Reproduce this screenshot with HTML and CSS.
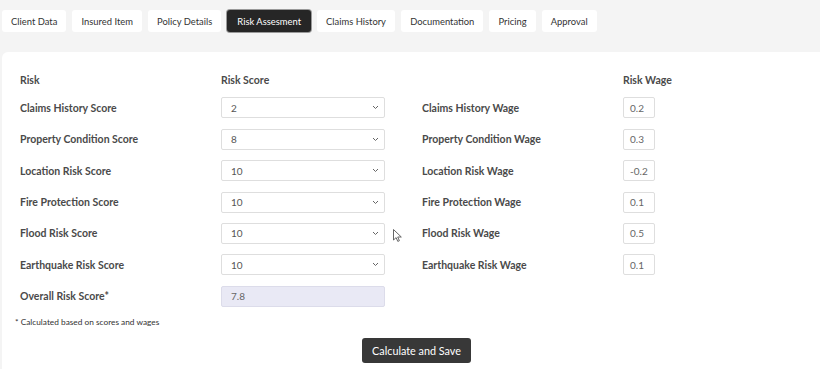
FILE: index.html
```html
<!DOCTYPE html>
<html lang="en">
<head>
<meta charset="utf-8">
<title>Risk Assesment</title>
<link rel="stylesheet" href="styles.css">
</head>
<body>
<nav class="tabs">
  <span class="tab">Client Data</span>
  <span class="tab">Insured Item</span>
  <span class="tab">Policy Details</span>
  <span class="tab active">Risk Assesment</span>
  <span class="tab">Claims History</span>
  <span class="tab">Documentation</span>
  <span class="tab">Pricing</span>
  <span class="tab">Approval</span>
</nav>
<main class="card">
  <div class="grid">
    <div class="head">Risk</div>
    <div class="head">Risk Score</div>
    <div class="head"></div>
    <div class="head">Risk Wage</div>

    <div class="label">Claims History Score</div>
    <div class="select"><span>2</span><svg class="chev" width="7" height="5" viewBox="0 0 7 5"><path d="M1 1l2.5 2.5L6 1" fill="none" stroke="#666" stroke-width="1"/></svg></div>
    <div class="label">Claims History Wage</div>
    <div class="wage">0.2</div>

    <div class="label">Property Condition Score</div>
    <div class="select"><span>8</span><svg class="chev" width="7" height="5" viewBox="0 0 7 5"><path d="M1 1l2.5 2.5L6 1" fill="none" stroke="#666" stroke-width="1"/></svg></div>
    <div class="label">Property Condition Wage</div>
    <div class="wage">0.3</div>

    <div class="label">Location Risk Score</div>
    <div class="select"><span>10</span><svg class="chev" width="7" height="5" viewBox="0 0 7 5"><path d="M1 1l2.5 2.5L6 1" fill="none" stroke="#666" stroke-width="1"/></svg></div>
    <div class="label">Location Risk Wage</div>
    <div class="wage">-0.2</div>

    <div class="label">Fire Protection Score</div>
    <div class="select"><span>10</span><svg class="chev" width="7" height="5" viewBox="0 0 7 5"><path d="M1 1l2.5 2.5L6 1" fill="none" stroke="#666" stroke-width="1"/></svg></div>
    <div class="label">Fire Protection Wage</div>
    <div class="wage">0.1</div>

    <div class="label">Flood Risk Score</div>
    <div class="select cursor-host"><span>10</span><svg class="chev" width="7" height="5" viewBox="0 0 7 5"><path d="M1 1l2.5 2.5L6 1" fill="none" stroke="#666" stroke-width="1"/></svg>
      <svg class="cursor" width="9" height="13" viewBox="0 0 9 13"><path d="M0.5 0.5v10.5l2.6-2.4 1.7 3.8 1.6-0.7-1.7-3.7h3.6z" fill="#fff" stroke="#555" stroke-width="0.9" stroke-linejoin="round"/></svg>
    </div>
    <div class="label">Flood Risk Wage</div>
    <div class="wage">0.5</div>

    <div class="label">Earthquake Risk Score</div>
    <div class="select"><span>10</span><svg class="chev" width="7" height="5" viewBox="0 0 7 5"><path d="M1 1l2.5 2.5L6 1" fill="none" stroke="#666" stroke-width="1"/></svg></div>
    <div class="label">Earthquake Risk Wage</div>
    <div class="wage">0.1</div>

    <div class="label">Overall Risk Score*</div>
    <div class="overall">7.8</div>
  </div>
  <p class="note">* Calculated based on scores and wages</p>
  <div class="actions">
    <button class="btn" type="button">Calculate and Save</button>
  </div>
</main>
</body>
</html>
```

FILE: styles.css
```css
html, body {
  margin: 0;
  padding: 0;
  height: 100%;
}
body {
  background: #f4f4f4;
  font-family: Lato, "Open Sans", sans-serif;
  color: #444;
  overflow: hidden;
}
.tabs {
  display: flex;
  gap: 6px;
  padding: 10px 0 0 2px;
}
.tab {
  display: flex;
  align-items: center;
  height: 22px;
  padding: 0 9.1px;
  background: #fff;
  border-radius: 3px;
  font-size: 9.4px;
  color: #333;
  box-sizing: border-box;
}
.tab.active {
  background: #262626;
  color: #fff;
  padding: 0 10px;
  box-shadow: 0 0 0 1px #999;
}
.card {
  margin: 20px 0 0 2px;
  background: #fff;
  border-radius: 6px 0 0 0;
  padding: 21px 0 40px 13px;
  min-height: 300px;
}
.grid {
  display: grid;
  grid-template-columns: 201px 201px 201px 80px;
  grid-template-rows: 14px;
  grid-auto-rows: 21px;
  row-gap: 10.4px;
  margin-left: 5px;
  align-items: center;
}
.grid > .head {
  font-size: 10.5px;
  font-weight: bold;
  color: #4a4a4a;
  height: 14px;
  line-height: 14px;
  white-space: nowrap;
}
.label {
  font-size: 10.5px;
  font-weight: bold;
  color: #4a4a4a;
  white-space: nowrap;
}
.select {
  position: relative;
  width: 164px;
  height: 21px;
  box-sizing: border-box;
  border: 1px solid #dedede;
  border-radius: 2px;
  display: flex;
  align-items: center;
  justify-content: space-between;
  padding: 0 5px 0 9px;
  font-size: 10px;
  color: #555;
}
.wage {
  width: 32px;
  height: 21px;
  box-sizing: border-box;
  border: 1px solid #dedede;
  border-radius: 2px;
  display: flex;
  align-items: center;
  padding-left: 6px;
  font-size: 10px;
  color: #666;
}
.overall {
  width: 164px;
  height: 21px;
  box-sizing: border-box;
  border: 1px solid #dcdcea;
  border-radius: 2px;
  background: #e9e9f5;
  display: flex;
  align-items: center;
  padding-left: 9px;
  font-size: 10px;
  color: #666;
}
.cursor {
  position: absolute;
  left: 171px;
  top: 5px;
}
.note {
  margin: 10px 0 0 0;
  font-size: 8.3px;
  color: #333;
}
.actions {
  display: flex;
  justify-content: center;
  padding-right: 2px;
  margin-top: 11px;
}
.btn {
  font-family: Lato, "Open Sans", sans-serif;
  font-size: 10.8px;
  color: #fff;
  background: #383838;
  border: none;
  border-radius: 3px;
  height: 25px;
  width: 109px;
  padding: 0;
}
```
